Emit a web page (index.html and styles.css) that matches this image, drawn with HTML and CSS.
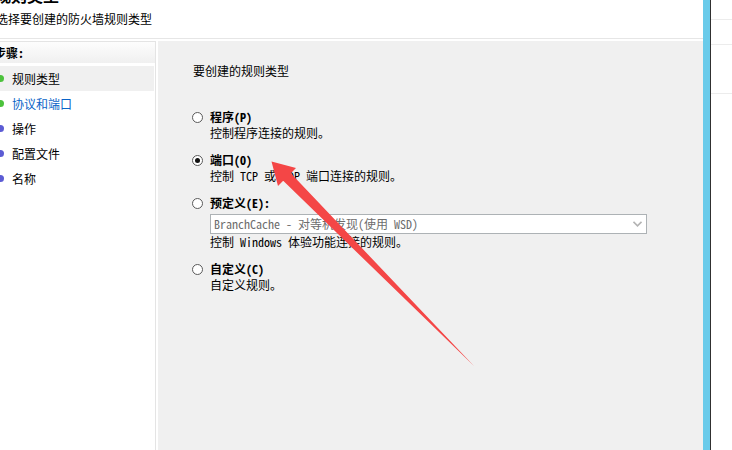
FILE: index.html
```html
<!DOCTYPE html>
<html lang="zh-CN">
<head>
    <meta charset="UTF-8">
    <meta name="viewport" content="width=device-width, initial-scale=1.0">
    <title>新建入站规则向导</title>
    <link rel="stylesheet" href="styles.css">
</head>
<body>
    <div class="window">
        <div class="main">
            <div class="header">
                <div class="title">规则类型</div>
                <div class="subtitle">选择要创建的防火墙规则类型</div>
            </div>

            <div class="wizard">
                <div class="steps">
                    <div class="steps-title">步骤:</div>
                    <ul class="step-list">
                        <li class="step done current"><span class="dot"></span>规则类型</li>
                        <li class="step done active"><span class="dot"></span>协议和端口</li>
                        <li class="step"><span class="dot"></span>操作</li>
                        <li class="step"><span class="dot"></span>配置文件</li>
                        <li class="step"><span class="dot"></span>名称</li>
                    </ul>
                </div>

                <div class="content">
                    <p class="question">要创建的规则类型</p>

                    <div class="option first">
                        <div class="option-head"><span class="radio"></span><b>程序(P)</b></div>
                        <div class="option-desc">控制程序连接的规则。</div>
                    </div>

                    <div class="option">
                        <div class="option-head"><span class="radio checked"></span><b>端口(O)</b></div>
                        <div class="option-desc">控制 TCP 或 UDP 端口连接的规则。</div>
                    </div>

                    <div class="option">
                        <div class="option-head"><span class="radio"></span><b>预定义(E):</b></div>
                        <div class="select">
                            <span>BranchCache - 对等机发现(使用 WSD)</span>
                            <svg class="chevron" width="9" height="6" viewBox="0 0 9 6">
                                <path d="M0.5 0.8 L4.5 4.8 L8.5 0.8" fill="none" stroke="#b4b4b4" stroke-width="1.6"/>
                            </svg>
                        </div>
                        <div class="option-desc">控制 Windows 体验功能连接的规则。</div>
                    </div>

                    <div class="option">
                        <div class="option-head"><span class="radio"></span><b>自定义(C)</b></div>
                        <div class="option-desc">自定义规则。</div>
                    </div>
                </div>
            </div>
        </div>

        <div class="bar"></div>

        <div class="side">
            <div class="side-row r1"></div>
            <div class="side-row r2"></div>
            <div class="side-row r3"></div>
        </div>
    </div>

    <!-- annotation arrow drawn over the dialog -->
    <svg class="arrow" width="732" height="450" viewBox="0 0 732 450">
        <polygon points="271.5,161.5 296,168 290.8,173.3 474,366 283.2,180.8 278,186"
                 fill="#f44646"/>
    </svg>
</body>
</html>
```

FILE: styles.css
```css
/* Firewall wizard: rule type page */
body {
    margin: 0;
    width: 732px;
    height: 450px;
    overflow: hidden;
    position: relative;
    background-color: #fff;
    font-family: "Noto Sans Mono CJK SC", "Noto Sans CJK SC", sans-serif;
    font-size: 12px;
    line-height: 16px;
    color: #000;
}
.window {
    display: flex;
    height: 450px;
}
.main {
    width: 703px;
    display: flex;
    flex-direction: column;
}
.header {
    height: 38px;
    border-bottom: 1px solid #e6e6e6;
    margin-bottom: 2px;
    background-color: #fff;
}
.title {
    font-size: 16px;
    font-weight: bold;
    line-height: 16px;
    margin: -13px 0 0 -5px;
}
.subtitle {
    margin: 8px 0 0 -4px;
}
.wizard {
    flex: 1;
    display: flex;
    gap: 2px;
}
/* Left steps list */
.steps {
    width: 155px;
    border-top: 1px solid #e4e4e4;
    border-right: 1px solid #e4e4e4;
    background-color: #fff;
}
.steps-title {
    height: 21px;
    line-height: 21px;
    font-weight: bold;
    text-indent: -6px;
    background: linear-gradient(#fdfdfd, #f0f0f0);
}
.step-list {
    list-style: none;
    margin: 3px 0 0 0;
    padding: 0;
}
.step {
    height: 25px;
    margin-right: 1px;
    display: flex;
    align-items: center;
    gap: 8px;
}
.step.current {
    background-color: #f0f0f0;
}
.step.active {
    color: #0a64c8;
}
.dot {
    width: 7px;
    height: 7px;
    margin-left: -3px;
    border-radius: 50%;
    background-color: #5c5cd4;
}
.step.done .dot {
    background-color: #4cc23c;
}
/* Right content */
.content {
    flex: 1;
    background-color: #f0f0f0;
    padding: 22px 0 0 34px;
}
.question {
    margin: 0;
    padding-left: 1px;
}
.option {
    margin-top: 11px;
}
.option.first {
    margin-top: 30px;
}
.option-head {
    display: flex;
    align-items: center;
    gap: 7px;
}
.radio {
    width: 9px;
    height: 9px;
    border: 1px solid #5a5a5a;
    border-radius: 50%;
    background-color: #fff;
    display: flex;
    align-items: center;
    justify-content: center;
}
.radio.checked::after {
    content: "";
    width: 5px;
    height: 5px;
    border-radius: 50%;
    background-color: #111;
}
.option-desc {
    margin-left: 18px;
}
.select {
    margin: 3px 0 0 18px;
    width: 435px;
    height: 18px;
    border: 1px solid #adb2b5;
    background-color: #fff;
    color: #6d6d6d;
    display: flex;
    align-items: center;
    justify-content: space-between;
    padding: 0 4px 0 3px;
    box-sizing: content-box;
    width: 428px;
}
.chevron {
    display: block;
}
/* Right edge of the screen */
.bar {
    width: 7px;
    background-color: #6acbea;
    border-right: 1px solid #303030;
}
.side {
    flex: 1;
    background-color: #fff;
}
.side-row {
    border-bottom: 1px solid #ececec;
}
.side-row.r1 {
    height: 19px;
}
.side-row.r2 {
    height: 24px;
}
.side-row.r3 {
    height: 48px;
}
.arrow {
    position: absolute;
    top: 0;
    left: 0;
    pointer-events: none;
}
```
